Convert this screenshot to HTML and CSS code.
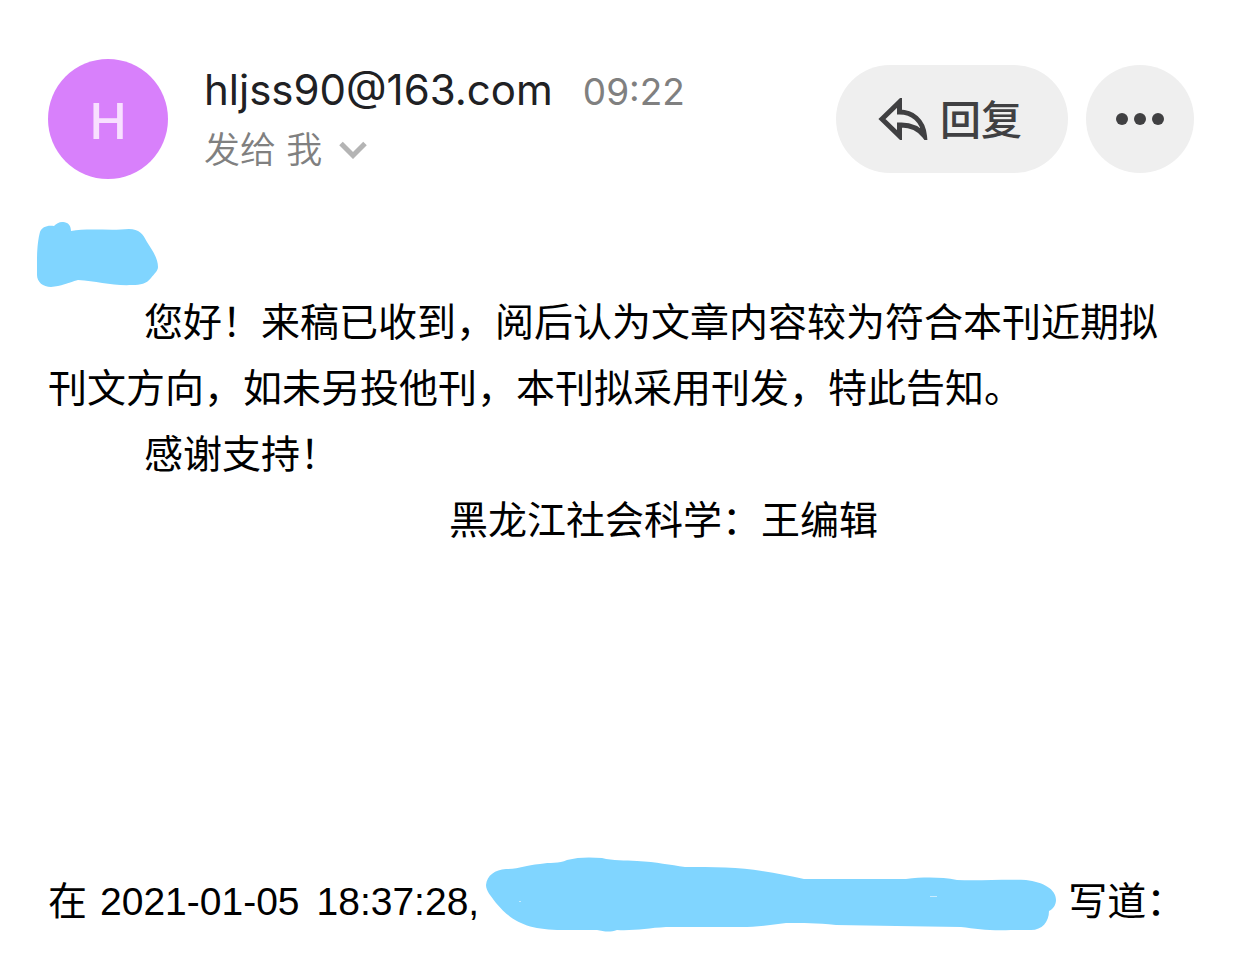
FILE: index.html
```html
<!DOCTYPE html>
<html lang="zh-CN">
<head>
<meta charset="utf-8">
<meta name="viewport" content="width=device-width, initial-scale=1">
<title>邮件</title>
<link rel="stylesheet" href="styles.css">
</head>
<body>
<article class="mail">
  <header class="mail-header">
    <div class="avatar">H</div>
    <div class="sender">
      <div class="sender-line">
        <span class="address">hljss90@163.com</span>
        <time class="time">09:22</time>
      </div>
      <button class="recipient" type="button">
        <span>发给 我</span>
        <svg class="chevron" viewBox="0 0 28 18" aria-hidden="true"><path d="M2 2.5 14 14.5 26 2.5"/></svg>
      </button>
    </div>
    <div class="actions">
      <button class="action reply" type="button">
        <svg class="reply-icon" viewBox="0 0 50 42" aria-hidden="true"><path d="M4 21 21.500 4V14C34 14 45 22 46.500 38C40 29.500 32 26.500 21.500 27V38Z"/></svg>
        <span class="reply-label">回复</span>
      </button>
      <button class="action more" type="button" aria-label="更多">
        <svg class="more-icon" viewBox="0 0 48 12" aria-hidden="true"><circle cx="6" cy="6" r="6"/><circle cx="24" cy="6" r="6"/><circle cx="42" cy="6" r="6"/></svg>
      </button>
    </div>
  </header>
  <div class="mail-body">
    <svg class="mark mark-name" viewBox="0 0 121 66" aria-hidden="true"><path d="M0 38C0 28 1 17 3 10C5 5 10 3 17 4C22-2 34-2 34 9C50 6 75 9 92 7C102 7 106 12 110 20C116 29 121 37 121 45C121 49 117 52 114 56C109 62 104 63 95 63C75 64 60 59 41 58C31 61 24 64 14 65C6 65 0 60 0 53Z"/></svg>
    <p class="indented">您好！来稿已收到，阅后认为文章内容较为符合本刊近期拟刊文方向，如未另投他刊，本刊拟采用刊发，特此告知。</p>
    <p class="indented">感谢支持！</p>
    <p class="signature">黑龙江社会科学：王编辑</p>
  </div>
  <footer class="quote">
    <span>在</span>
    <span class="quote-date">2021-01-05</span>
    <span class="quote-time">18:37:28,</span>
    <svg class="mark mark-address" viewBox="0 0 570 76" aria-hidden="true"><path d="M0 28C1 18 9 13 20 12C34 12 39 8 54 7C64 5 73 7 81 3C92 0 104 0 116 1C127 4 139 3 151 4C171 5 184 8 199 10C225 10 255 10 276 14C291 16 304 19 318 22H420C438 20 455 20 471 23C494 24 518 22 540 23C557 25 570 32 570 43C570 48 567 52 563 54C563 65 556 73 545 73H525C505 74 491 72 475 70C430 69 390 69 350 68C330 66 318 66 300 66C286 68 271 70 255 70H180C162 71 148 74 131 73C123 76 117 74 111 73H76C42 73 26 65 10 46C5 39 0 34 0 28Z"/><path class="speck" d="M33 44h2v1h-2zM444 39h7v1h-7z"/></svg>
    <span class="quote-verb">写道：</span>
  </footer>
</article>
</body>
</html>
```
FILE: styles.css
```css
* {
  box-sizing: border-box;
}

body {
  margin: 0;
  background: #fff;
  color: #000;
  font-family: "Liberation Sans", "Noto Sans CJK SC", sans-serif;
}

button {
  border: 0;
  padding: 0;
  background: none;
  font: inherit;
  color: inherit;
}

.mail {
  padding: 59px 48px 36px;
}

.mail-header {
  display: flex;
  align-items: center;
  gap: 36px;
  font-family: Inter, "Noto Sans CJK SC", sans-serif;
}

.avatar {
  display: flex;
  flex: none;
  align-items: center;
  justify-content: center;
  width: 120px;
  height: 120px;
  padding-top: 4px;
  border-radius: 50%;
  background: #d880fb;
  color: #f8e0ff;
  font-size: 50px;
  font-weight: 500;
}

.sender {
  flex: 1;
}

.sender-line {
  display: flex;
  align-items: baseline;
  gap: 30px;
  line-height: 60px;
}

.address {
  color: #202124;
  font-size: 42px;
}

.time {
  color: #808080;
  font-size: 37px;
}

.recipient {
  display: flex;
  align-items: center;
  gap: 17px;
  color: #808080;
  font-size: 36px;
  font-weight: 350;
  line-height: 56px;
}

.chevron {
  width: 28px;
  height: 18px;
  fill: none;
  stroke: #b4b4b4;
  stroke-width: 5;
}

.actions {
  display: flex;
  gap: 18px;
}

.action {
  display: flex;
  align-items: center;
  justify-content: center;
  height: 108px;
  border-radius: 54px;
  background: #efefef;
  color: #404042;
}

.reply {
  gap: 12px;
  padding: 0 46px 0 42px;
  font-size: 41px;
  font-weight: 500;
}

.reply-label {
  padding-bottom: 4px;
}

.reply-icon {
  width: 50px;
  height: 42px;
  fill: none;
  stroke: currentColor;
  stroke-width: 5;
}

.more {
  width: 108px;
}

.more-icon {
  width: 48px;
  height: 12px;
  fill: currentColor;
}

.mail-body {
  margin-top: 43px;
  font-size: 39px;
  line-height: 66px;
}

.mail-body p {
  margin: 0;
}

.indented {
  text-indent: 96px;
}

.mail-body .signature {
  margin-left: 401px;
}

.mark {
  display: block;
  fill: #80d5ff;
}

.mark-name {
  width: 121px;
  height: 66px;
  margin: 0 0 2px -11px;
}

.mark-address {
  width: 570px;
  height: 76px;
  margin-left: 7px;
}

.speck {
  fill: #c8ecff;
}

.quote {
  display: flex;
  align-items: flex-end;
  margin-top: 303px;
  font-size: 39px;
  line-height: 62px;
  white-space: nowrap;
}

.quote-date {
  margin-left: 13px;
}

.quote-time {
  margin-left: 17px;
}

.quote-verb {
  margin-left: 12px;
}
```
